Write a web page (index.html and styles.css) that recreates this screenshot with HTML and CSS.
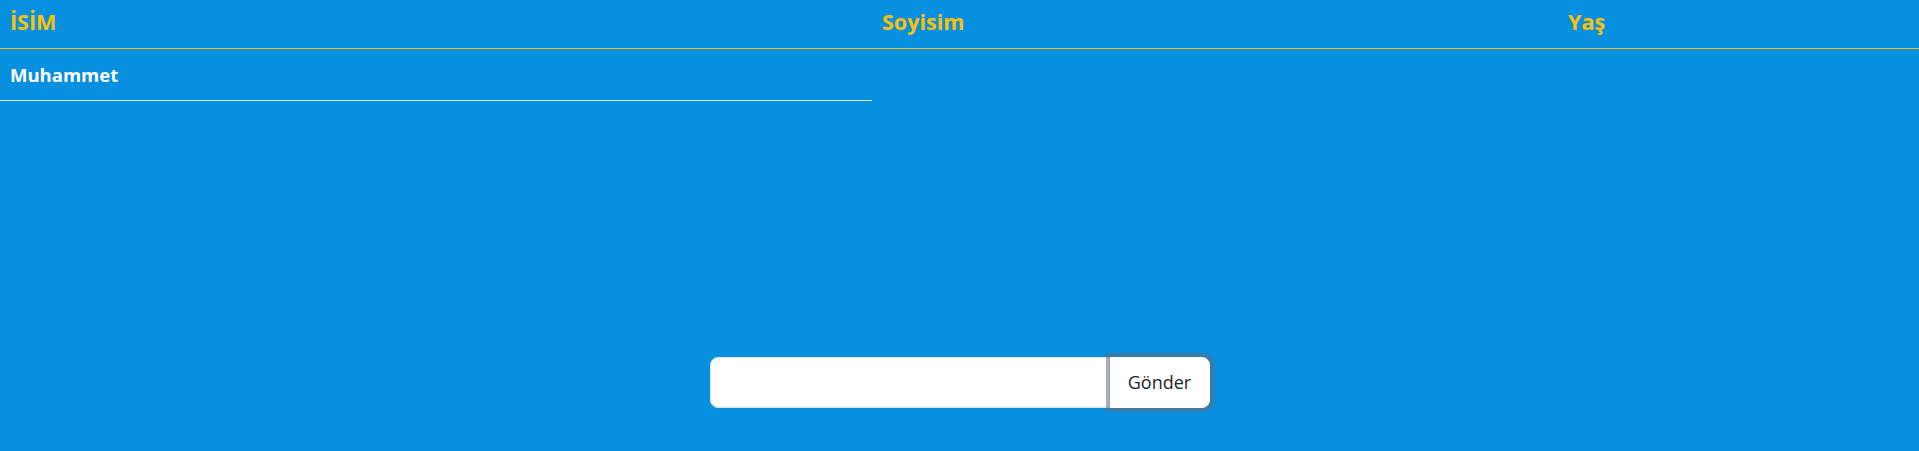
FILE: index.html
```html
<!DOCTYPE html>
<html lang="tr">
<head>
<meta charset="utf-8">
<title>Liste</title>
<link rel="stylesheet" href="styles.css">
</head>
<body>
<table class="people">
  <colgroup>
    <col class="col-name">
    <col class="col-surname">
    <col class="col-age">
  </colgroup>
  <thead>
    <tr>
      <th>İSİM</th>
      <th>Soyisim</th>
      <th>Yaş</th>
    </tr>
  </thead>
  <tbody>
    <tr>
      <td class="cell">Muhammet</td>
    </tr>
  </tbody>
</table>
<form class="entry">
  <div class="input-group">
    <input class="field" type="text">
    <button class="send" type="button">Gönder</button>
  </div>
</form>
</body>
</html>
```

FILE: styles.css
```css
html, body {
  margin: 0;
  padding: 0;
}
body {
  background: #078fe0;
  font-family: "Open Sans", "Noto Sans", sans-serif;
  height: 451px;
}
.people {
  width: 100%;
  border-collapse: collapse;
  table-layout: fixed;
}
.col-name { width: 872px; }
.col-surname { width: 686px; }
.people th {
  text-align: left;
  vertical-align: top;
  color: #ffc107;
  font-size: 21.5px;
  line-height: 29px;
  font-weight: 700;
  height: 48px;
  padding: 7px 10px 0;
  border-bottom: 1px solid #ffc107;
  box-sizing: border-box;
}
.people td.cell {
  color: #ffffff;
  font-size: 18.5px;
  font-weight: 700;
  height: 52px;
  padding: 0 10px;
  border-bottom: 1px solid rgba(255, 255, 255, 0.85);
  box-sizing: border-box;
}
.entry {
  display: flex;
  justify-content: center;
  margin-top: 256px;
}
.input-group {
  display: flex;
  width: 500px;
  height: 51px;
}
.field {
  flex: 1;
  margin: 0;
  border: 1px solid #dee2e6;
  border-radius: 8px 0 0 8px;
  background: #ffffff;
  font-size: 20px;
  padding: 8px 16px;
  outline: none;
}
.send {
  width: 100px;
  margin: 0;
  border: 1px solid #ffffff;
  border-radius: 0 8px 8px 0;
  background: #ffffff;
  color: #212529;
  font-family: "Open Sans", "Noto Sans", sans-serif;
  font-size: 18px;
  padding: 8px 12px;
  box-shadow: 0 0 0 4px rgba(100, 110, 120, 0.55);
  position: relative;
}
```
